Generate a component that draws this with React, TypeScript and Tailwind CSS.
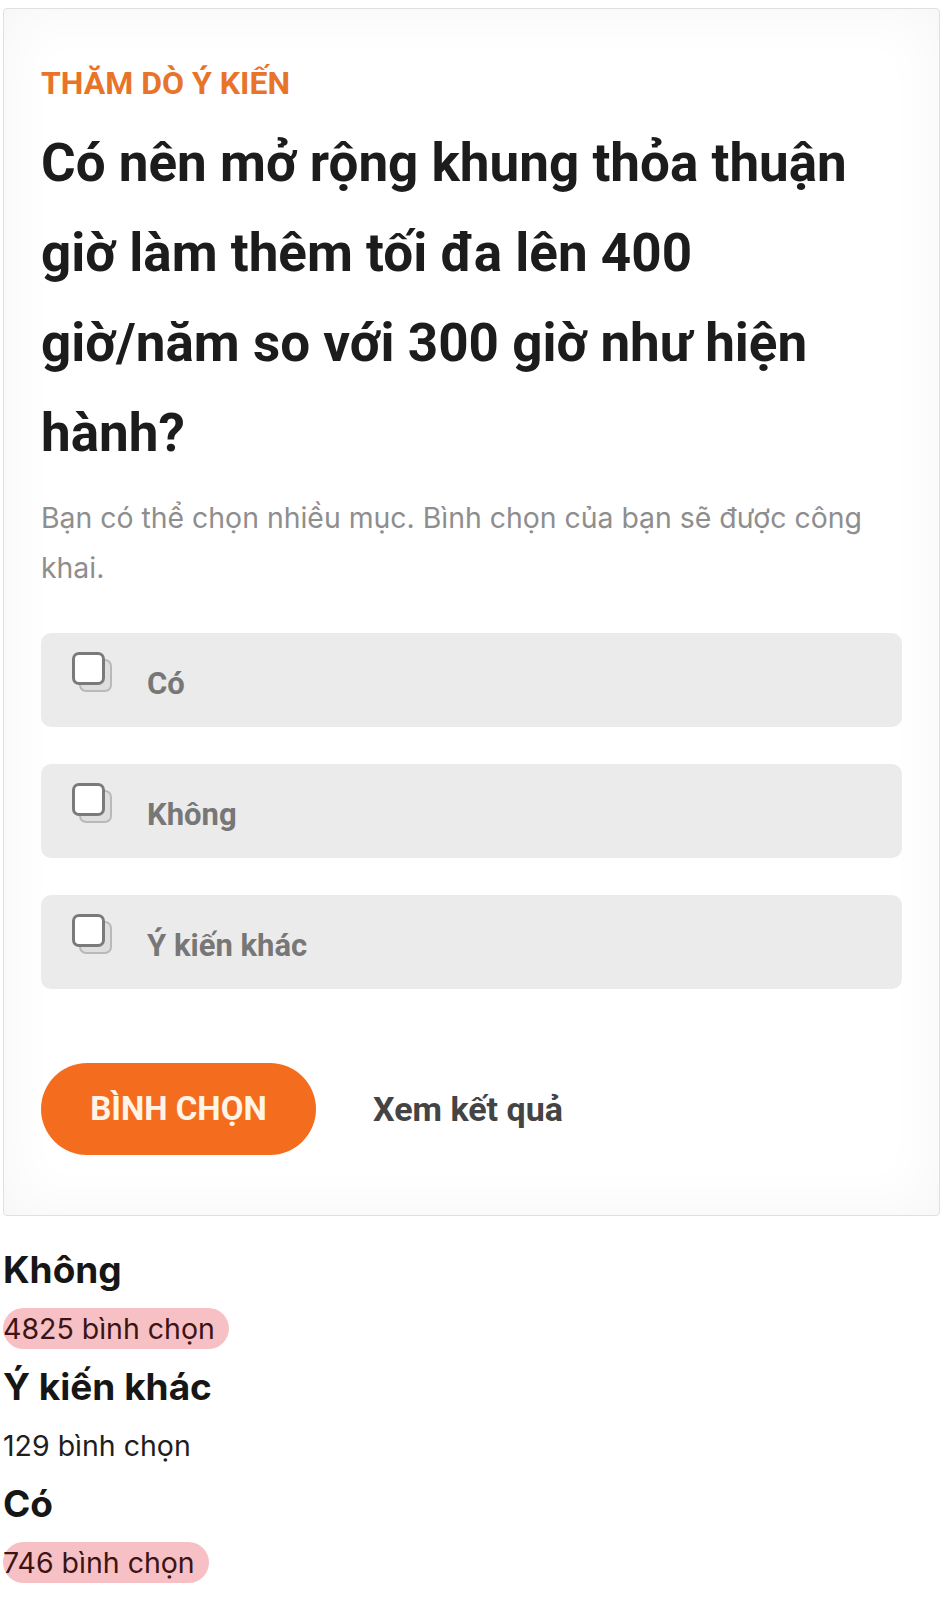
const options = ["Có", "Không", "Ý kiến khác"];

const results = [
  { label: "Không", votes: "4825 bình chọn", marked: true },
  { label: "Ý kiến khác", votes: "129 bình chọn", marked: false },
  { label: "Có", votes: "746 bình chọn", marked: true },
];

function CheckIcon() {
  return (
    <span className="relative block h-[41px] w-[41px] shrink-0">
      <span className="absolute left-[7px] top-[7px] h-[33px] w-[33px] rounded-[7px] border-2 border-[#b9b9b9] bg-[#dedede]" />
      <span className="absolute left-0 top-0 h-[33px] w-[33px] rounded-[7px] border-[3px] border-[#7a7a7a] bg-white" />
    </span>
  );
}

export default function App() {
  return (
    <div className="min-h-[1600px] w-[949px] bg-white pt-[8px] font-['Roboto',sans-serif]">
      <section className="mx-[3px] w-[937px] rounded-[4px] border border-[#e0e0e0] bg-white px-[37px] pb-[60px] pt-[56px] shadow-[inset_0_0_60px_rgba(0,0,0,0.045)]">
        <p className="text-[32px] font-bold leading-[36px] text-[#e8742a]">
          THĂM DÒ Ý KIẾN
        </p>
        <h2 className="mt-[17px] text-[53px] font-bold leading-[90px] text-[#1c1c1c]">
          Có nên mở rộng khung thỏa thuận giờ làm thêm tối đa lên 400 giờ/năm so
          với 300 giờ như hiện hành?
        </h2>
        <p className="mt-[15px] font-['Inter',sans-serif] text-[28.4px] font-normal leading-[50px] text-[#8e8e8e]">
          Bạn có thể chọn nhiều mục. Bình chọn của bạn sẽ được công khai.
        </p>

        <div className="mt-[40px] flex flex-col gap-[37px]">
          {options.map((option) => (
            <label
              className="flex h-[94px] items-start rounded-[10px] bg-[#ebebeb] pl-[31px] pt-[19px]"
              key={option}
            >
              <CheckIcon />
              <span className="ml-[34px] mt-[14px] text-[31px] font-bold leading-[36px] text-[#777]">
                {option}
              </span>
            </label>
          ))}
        </div>

        <div className="mt-[74px] flex items-center">
          <button className="flex h-[92px] w-[275px] items-center justify-center rounded-full bg-[#f46d1f] text-[33px] font-bold text-[#fff4e6]">
            BÌNH CHỌN
          </button>
          <button className="ml-[57px] text-[34px] font-bold text-[#444]">
            Xem kết quả
          </button>
        </div>
      </section>

      <div className="mt-[25px] pl-[3px] font-['Inter',sans-serif]">
        {results.map((result) => (
          <div key={result.label}>
            <p className="text-[37px] font-bold leading-[58px] text-[#161616]">
              {result.label}
            </p>
            <p className="text-[28.5px] leading-[59px] text-[#1e1e1e]">
              {result.marked ? (
                <span className="rounded-full bg-[#f08d94]/55 py-[3px] pr-[14px] text-[#3d1414]">
                  {result.votes}
                </span>
              ) : (
                result.votes
              )}
            </p>
          </div>
        ))}
      </div>
    </div>
  );
}
